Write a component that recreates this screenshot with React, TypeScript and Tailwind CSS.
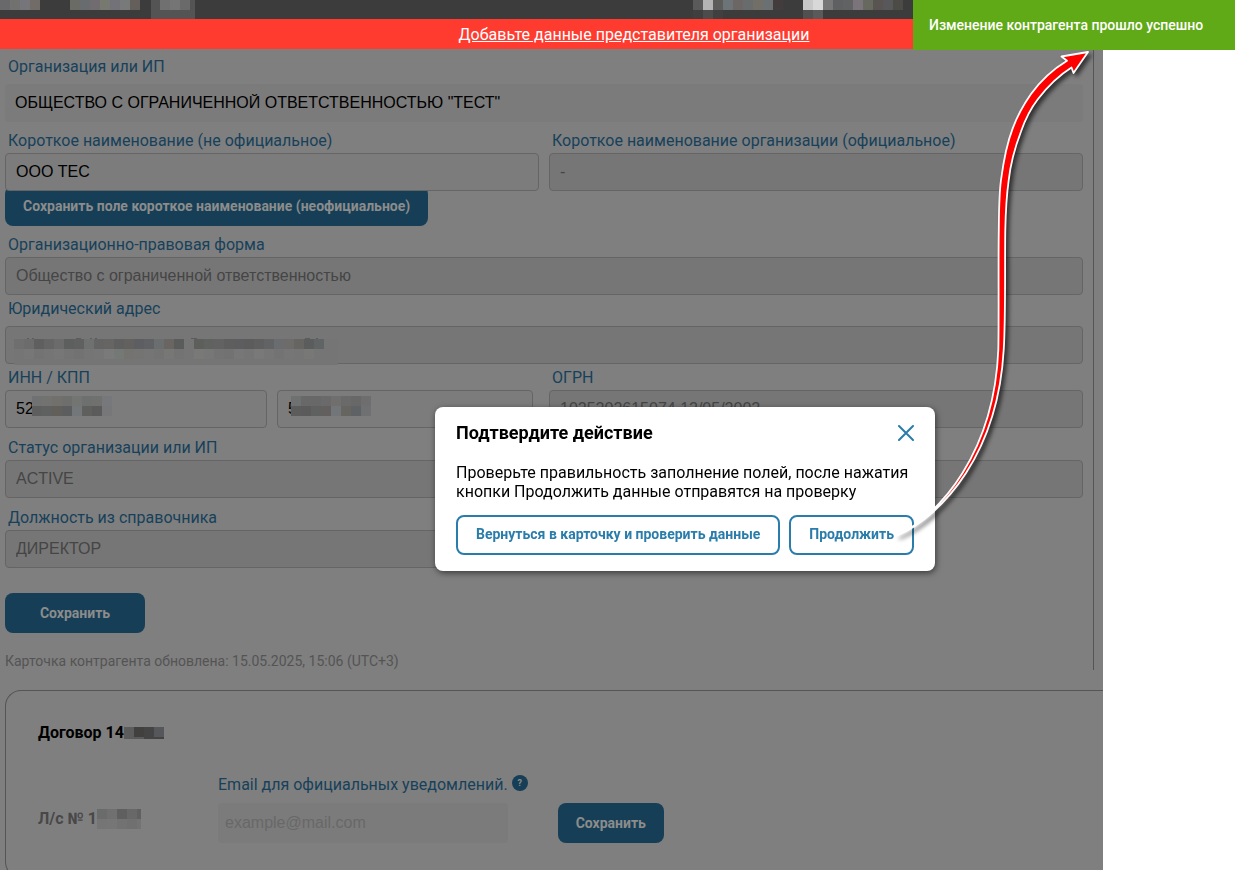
import { useId, useState } from "react"
import type { ReactNode } from "react"

interface FieldProps {
  label: string
  defaultValue: string
  disabled?: boolean
  labelClass?: string
  children?: ReactNode
}

const inputBase = "block h-[38px] w-full rounded border border-[#656565] px-[10px] font-['Liberation_Sans',sans-serif] text-base outline-none"
const inputActive = "bg-[#7c7c7c] text-black"
const inputDisabled = "bg-[#767676] text-[#454545]"
const labelBase = "block pl-[3px] text-base leading-5 text-[#17415a]"
const darkButton = "h-10 rounded-lg bg-[#163f57] px-[18px] text-sm font-bold text-[#8c8c8c]"
const outlineButton = "h-10 rounded-lg border-2 border-[#2a7dab] bg-white px-[18px] pb-[2px] text-sm font-bold text-[#2a7dab]"

// Pixelated patch that hides private data, one colour per 10px cell
function Mosaic({ rows, className = "" }: { rows: string[]; className?: string }) {
  const cells = rows.map((row) => row.split(" "))
  const width = Math.max(...cells.map((row) => row.length)) * 10
  const height = cells.length * 10
  return (
    <svg className={className} width={width} height={height} shapeRendering="crispEdges" aria-hidden="true">
      {cells.map((row, y) =>
        row.map((color, x) => <rect key={`${x}-${y}`} x={x * 10} y={y * 10} width="10" height="10" fill={`#${color}`} />)
      )}
    </svg>
  )
}

function Field({ label, defaultValue, disabled = true, labelClass = "pt-px pb-[2px]", children }: FieldProps) {
  const id = useId()
  return (
    <div>
      <label htmlFor={id} className={`${labelBase} ${labelClass}`}>{label}</label>
      <div className="relative z-10">
        <input id={id} defaultValue={defaultValue} disabled={disabled} className={`${inputBase} ${disabled ? inputDisabled : inputActive}`} />
        {children}
      </div>
    </div>
  )
}

function TopBar() {
  return (
    <header>
      <div className="flex h-[19px] items-start overflow-hidden bg-[#3c3c3c]">
        <Mosaic rows={["69696c 71726f 75757a 726c68"]} />
        <Mosaic className="ml-[30px]" rows={["6b6b66 686c6e 716c6f 77786f 737279 787a7a 655f5b"]} />
        <div className="ml-[11px] h-full w-11 bg-[#545454] pl-[9px]">
          <Mosaic rows={["707070 757575 6a6a6a"]} />
        </div>
        <Mosaic className="ml-[498px] shrink-0" rows={["5a5a5a b4b4b4 5c5c5a 6d7477 6c6664 686c6c 716f68 6b7072 433c3d", "3f3f3f 4c4c4c 404040 3c3c3c 3c3c3c 3c3c3c 3c3c3c 3c3c3c 3c3c3c"]} />
        <Mosaic className="ml-5 shrink-0" rows={["c8c8c8 d8d8d8 777777 5e6062 606264 7b747b 67695f 595452 58585a 4c4b46", "505050 5a5a5a"]} />
      </div>
      <div className="flex h-[30px] items-center justify-center bg-[#ff3b30] pt-px pl-[33px]">
        <a href="#representative" className="text-base text-white underline">Добавьте данные представителя организации</a>
      </div>
    </header>
  )
}

function OrganizationForm() {
  const orgId = useId()
  const innId = useId()
  return (
    <form className="mr-[9px] border-r border-[#555] pt-2 pr-[10px] pl-[5px]" onSubmit={(e) => e.preventDefault()}>
      <label htmlFor={orgId} className={`${labelBase} pb-[7px]`}>Организация или ИП</label>
      <input
        id={orgId}
        readOnly
        defaultValue={'ОБЩЕСТВО С ОГРАНИЧЕННОЙ ОТВЕТСТВЕННОСТЬЮ "ТЕСТ"'}
        className="block h-[38px] w-full rounded bg-[#7b7b7b] px-[10px] font-['Liberation_Sans',sans-serif] text-base text-black outline-none"
      />

      <div className="mt-2 grid grid-cols-2 gap-[10px]">
        <div>
          <Field label="Короткое наименование (не официальное)" defaultValue="ООО ТЕС" disabled={false} />
          <button type="button" className={`${darkButton} relative -mt-[5px] whitespace-nowrap`}>
            Сохранить поле короткое наименование (неофициальное)
          </button>
        </div>
        <Field label="Короткое наименование организации (официальное)" defaultValue="-" />
      </div>

      <div className="mt-2">
        <Field label="Организационно-правовая форма" defaultValue="Общество с ограниченной ответственностью" />
      </div>

      <div className="mt-[3px]">
        <Field label="Юридический адрес" defaultValue="" labelClass="pt-px pb-[7px]">
          <div className="absolute top-3 left-[9px] h-[27px] w-[324px]">
            {/* tops of the letters that stick out over the patch */}
            <svg width="324" height="1" className="block" shapeRendering="crispEdges" stroke="#5c5c5c" aria-hidden="true">
              <path d="M13 .5h2M18 .5h2M62 .5h5M76 .5h2M81 .5h2M177 .5h6M291 .5h5M302 .5h2" />
            </svg>
            <div className="h-[26px] bg-[#757575]">
              <Mosaic
                rows={[
                  "6f6f6f 6c6c6c 5f5f5f 656565 6b6b6b 5d5e5e 606060 6f7070 646464 666564 605f5f 636160 5c5e61 5f6164 6a6e6e 696562 5a5c5c 757575 5d5f5d 606260 616261 5e5e5e 5d5d5f 5c5c5c 605f5f 616365 6a6c6f 6d6c6b 676562 5b5c5c 616464",
                  "757575 777777 737373 757575 777777 747474 727272 757575 767676 797a79 757975 757370 747472 757575 737373 777776 737373 757575 797978 777777 737373 727272 777777 757575 797979 767676 737373 767676 757575 787977 757575",
                ]}
              />
            </div>
          </div>
        </Field>
      </div>

      <div className="mt-[3px] grid grid-cols-2 gap-[10px]">
        <div>
          <label htmlFor={innId} className={`${labelBase} pt-px pb-[2px]`}>ИНН / КПП</label>
          <div className="grid grid-cols-2 gap-[10px]">
            <div className="relative">
              <input id={innId} defaultValue="52" className={`${inputBase} ${inputActive}`} />
              <Mosaic
                className="absolute top-[6px] left-[27px]"
                rows={["6f7173 727271 71706d 6e6e6d 737573 6e706f 70706f 77787b", "5d5e5d 5f6060 625e5a 5b5d5f 747779 5f5f5d 5b5b5b 77777a"]}
              />
            </div>
            <div className="relative mr-[6px]">
              <input aria-label="КПП" defaultValue="5" className={`${inputBase} ${inputActive}`} />
              <Mosaic
                className="absolute top-[6px] left-[14px]"
                rows={["6f7070 686868 686868 6a6a6a 706f6d 6a6a6a 686868 6e6e6e", "5c5c5c 5a5b5a 5f6060 635f5e 727679 666560 5f6265 6f7072"]}
              />
            </div>
          </div>
        </div>
        <Field label="ОГРН" defaultValue="1025202615074 12/05/2002" />
      </div>

      <div className="mt-[9px]">
        <Field label="Статус организации или ИП" defaultValue="ACTIVE" />
      </div>

      <div className="mt-[9px] grid grid-cols-2 gap-[10px]">
        <Field label="Должность из справочника" defaultValue="ДИРЕКТОР" />
      </div>

      <button type="submit" className={`${darkButton} mt-[25px] w-[140px]`}>Сохранить</button>
      <p className="mt-5 pb-px text-sm leading-4 text-[#545454]">Карточка контрагента обновлена: 15.05.2025, 15:06 (UTC+3)</p>
    </form>
  )
}

function ContractCard() {
  const emailId = useId()
  return (
    <section className="mt-5 ml-[5px] rounded-l-2xl border-y border-l border-[#555] px-8 pt-8 pb-[34px]">
      <h2 className="flex items-center text-base leading-5 font-bold text-black">
        Договор 14
        <Mosaic className="h-3" rows={["5c5c5c 41403e 444444 56575a", "5c5c5c 5a5a5a 444444 444444"]} />
      </h2>
      <div className="mt-8 flex">
        <div className="flex w-[180px] pt-[34px] text-base leading-5 font-bold text-[#484848]">
          Л/с № 1
          <Mosaic className="w-11" rows={["6a6b6b 707070 5f5f5f 686868 606060", "757575 767676 727272 707070 737373"]} />
        </div>
        <form className="flex items-end gap-[50px]" onSubmit={(e) => e.preventDefault()}>
          <div>
            <div className="flex items-start gap-1 pb-2 text-[#17415a]">
              <label htmlFor={emailId} className="text-base leading-5 whitespace-nowrap">Email для официальных уведомлений.</label>
              <button type="button" aria-label="Подсказка" className="h-4 w-4 shrink-0 rounded-full bg-[#163f57] text-[9px] leading-4 font-bold text-[#8c8c8c]">?</button>
            </div>
            <input
              id={emailId}
              type="email"
              placeholder="example@mail.com"
              className="block h-10 w-[290px] rounded bg-[#7b7b7b] px-[7px] font-['Liberation_Sans',sans-serif] text-base outline-none placeholder:text-[#686868]"
            />
          </div>
          <button type="submit" className={`${darkButton} -ml-5`}>Сохранить</button>
        </form>
      </div>
    </section>
  )
}

function ConfirmDialog({ onClose }: { onClose: () => void }) {
  return (
    <div className="fixed inset-0 z-20 flex items-center justify-center pt-[108px] pl-[135px]">
      <div role="dialog" aria-labelledby="confirm-title" className="w-[500px] rounded-lg bg-white px-[21px] py-4 shadow-[1px_2px_6px_rgba(0,0,0,0.55)]">
        <div className="flex items-center justify-between">
          <h2 id="confirm-title" className="text-lg leading-5 font-bold text-black">Подтвердите действие</h2>
          <button type="button" aria-label="Закрыть" onClick={onClose}>
            <svg width="16" height="16" viewBox="0 0 16 16" fill="none" stroke="#2a7dab" strokeWidth="2" strokeLinecap="round">
              <path d="M1 1L15 15M15 1L1 15" />
            </svg>
          </button>
        </div>
        <p className="mt-5 text-base leading-[19px] text-black">
          Проверьте правильность заполнение полей, после нажатия кнопки Продолжить данные отправятся на проверку
        </p>
        <div className="mt-[14px] flex justify-between whitespace-nowrap">
          <button type="button" className={outlineButton} onClick={onClose}>Вернуться в карточку и проверить данные</button>
          <button type="button" className={outlineButton}>Продолжить</button>
        </div>
      </div>
    </div>
  )
}

// Tapered arrow from the dialog's button up to the toast
function Arrow() {
  return (
    <svg className="pointer-events-none absolute top-[40px] left-[885px] z-40" width="220" height="510" viewBox="885 40 220 510" aria-hidden="true">
      <defs>
        <linearGradient id="tail" gradientUnits="userSpaceOnUse" x1="897" y1="535" x2="960" y2="478">
          <stop offset="0" stopColor="#fff" />
          <stop offset="1" stopColor="#f00" />
        </linearGradient>
      </defs>
      <path
        className="drop-shadow-[3px_3px_2px_rgba(0,0,0,0.6)]"
        fill="url(#tail)"
        stroke="#fff"
        strokeWidth="1.8"
        strokeLinejoin="round"
        d="M897 535.5C941 514 994 452 998.3 350C999 320 998.2 260 998.8 230C999 210 999 195 1001 180C1003.5 161 1007 143 1012.7 128.3C1018 114 1024 104 1031 94C1041 80 1051 70.5 1067 60.7L1061.5 56.5L1088 52L1073.5 73L1071.5 67.5C1058 76 1048 86 1038 99C1031 108 1025 120 1021 131.5C1014 150 1010.5 163 1008.6 181C1006 200 1005.6 215 1005.3 230C1004.7 260 1005.8 320 1003.7 350C998 452 944 515 897 535.5Z"
      />
    </svg>
  )
}

export default function App() {
  const [open, setOpen] = useState(true)

  return (
    <div className="relative h-screen overflow-hidden bg-white font-[Roboto,sans-serif]">
      <TopBar />
      <main className="mr-[132px] bg-[#7f7f7f]">
        <OrganizationForm />
        <ContractCard />
      </main>

      {open && <ConfirmDialog onClose={() => setOpen(false)} />}

      <div role="status" className="fixed top-0 right-0 z-30 flex h-[50px] w-[322px] items-center bg-[#60a917] px-4 text-sm font-medium whitespace-nowrap text-white">
        Изменение контрагента прошло успешно
      </div>

      <Arrow />
    </div>
  )
}
